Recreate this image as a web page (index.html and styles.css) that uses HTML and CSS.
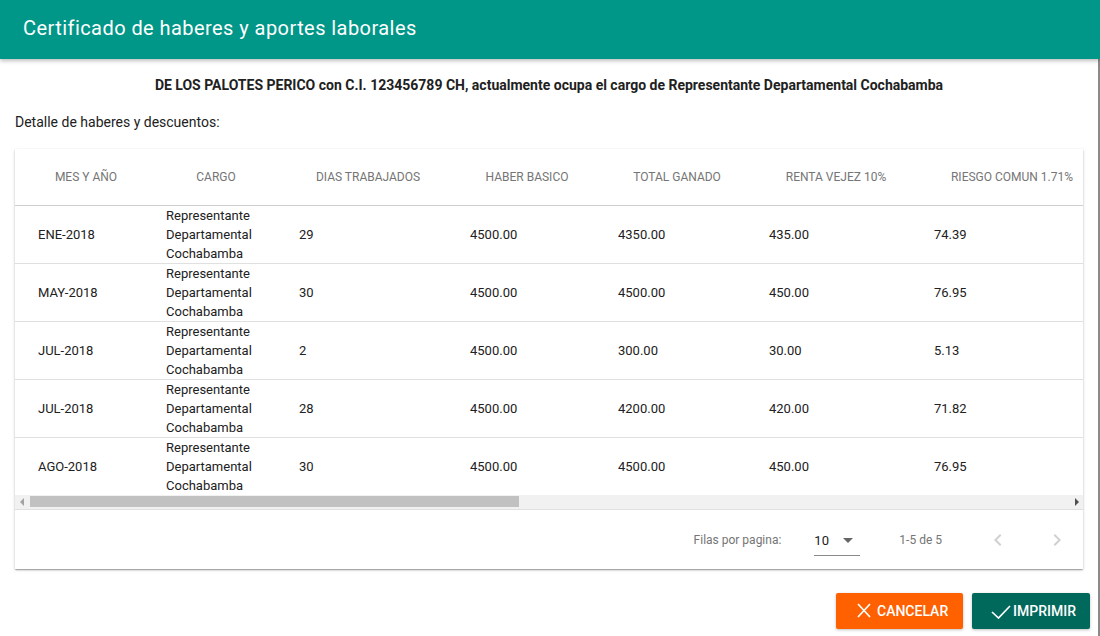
FILE: index.html
```html
<!DOCTYPE html>
<html lang="es">
<head>
<meta charset="utf-8">
<title>Certificado de haberes y aportes laborales</title>
<link rel="stylesheet" href="styles.css">
</head>
<body>
<div class="dialog">
  <header class="dlg-head">
    <h1 class="dlg-title">Certificado de haberes y aportes laborales</h1>
  </header>
  <main class="dlg-body">
    <p class="lead">DE LOS PALOTES PERICO con C.I. 123456789 CH, actualmente ocupa el cargo de Representante Departamental Cochabamba</p>
    <p class="subtitle">Detalle de haberes y descuentos:</p>
    <section class="card">
      <div class="table-wrap">
        <table class="grid">
          <colgroup>
            <col class="w1"><col class="w2"><col class="w3"><col class="w4"><col class="w5"><col class="w6"><col class="w7">
          </colgroup>
          <thead>
            <tr>
              <th>MES Y AÑO</th><th>CARGO</th><th>DIAS TRABAJADOS</th><th>HABER BASICO</th><th>TOTAL GANADO</th><th>RENTA VEJEZ 10%</th><th>RIESGO COMUN 1.71%</th>
            </tr>
          </thead>
          <tbody>
            <tr><td>ENE-2018</td><td>Representante Departamental Cochabamba</td><td>29</td><td>4500.00</td><td>4350.00</td><td>435.00</td><td>74.39</td></tr>
            <tr><td>MAY-2018</td><td>Representante Departamental Cochabamba</td><td>30</td><td>4500.00</td><td>4500.00</td><td>450.00</td><td>76.95</td></tr>
            <tr><td>JUL-2018</td><td>Representante Departamental Cochabamba</td><td>2</td><td>4500.00</td><td>300.00</td><td>30.00</td><td>5.13</td></tr>
            <tr><td>JUL-2018</td><td>Representante Departamental Cochabamba</td><td>28</td><td>4500.00</td><td>4200.00</td><td>420.00</td><td>71.82</td></tr>
            <tr><td>AGO-2018</td><td>Representante Departamental Cochabamba</td><td>30</td><td>4500.00</td><td>4500.00</td><td>450.00</td><td>76.95</td></tr>
          </tbody>
        </table>
      </div>
      <div class="hscroll">
        <span class="arrow arrow-left"></span>
        <div class="track"><div class="thumb"></div></div>
        <span class="arrow arrow-right"></span>
      </div>
      <footer class="pager">
        <span class="pager-label">Filas por pagina:</span>
        <div class="select">
          <span class="select-value">10</span>
          <span class="select-caret"></span>
        </div>
        <span class="pager-range">1-5 de 5</span>
        <button class="nav-btn" aria-label="Anterior">
          <svg width="24" height="24" viewBox="0 0 24 24"><path d="M15.41 7.41L14 6l-6 6 6 6 1.41-1.41L10.83 12z" fill="#d0d0d0"/></svg>
        </button>
        <button class="nav-btn" aria-label="Siguiente">
          <svg width="24" height="24" viewBox="0 0 24 24"><path d="M10 6L8.59 7.41 13.17 12l-4.58 4.59L10 18l6-6z" fill="#d0d0d0"/></svg>
        </button>
      </footer>
    </section>
    <div class="actions">
      <button class="btn btn-cancel">
        <svg class="ico-x" width="14" height="15" viewBox="0 0 14 15"><path d="M1 1L13 14M13 1L1 14" stroke="#fff" stroke-width="1.7" fill="none"/></svg>
        <span>CANCELAR</span>
      </button>
      <button class="btn btn-print">
        <svg class="ico-check" width="20" height="15" viewBox="0 0 20 15"><path d="M1 8L7.5 14L19 2" stroke="#fff" stroke-width="1.7" fill="none"/></svg>
        <span>IMPRIMIR</span>
      </button>
    </div>
  </main>
</div>
</body>
</html>
```

FILE: styles.css
```css
* { box-sizing: border-box; }
html, body { margin: 0; padding: 0; }
body {
  width: 1100px;
  height: 636px;
  overflow: hidden;
  background: #fff;
  font-family: Roboto, "Liberation Sans", Arial, sans-serif;
  color: #212121;
}
.dialog {
  position: relative;
  height: 636px;
  display: flex;
  flex-direction: column;
}
.dialog::after {
  content: "";
  position: absolute;
  right: 0;
  top: 41px;
  bottom: 0;
  width: 2px;
  background: #8a8a8a;
}
.dlg-head {
  height: 59px;
  background: #009688;
  display: flex;
  align-items: center;
  padding-left: 23px;
  padding-bottom: 3px;
  box-shadow: 0 2px 4px rgba(0,0,0,0.25);
  position: relative;
  z-index: 1;
}
.dlg-title {
  margin: 0;
  font-size: 20px;
  font-weight: 400;
  color: #fff;
  letter-spacing: 0.44px;
}
.dlg-body {
  padding: 17px 17px 0 15px;
}
.lead {
  margin: 0;
  text-align: center;
  font-weight: 700;
  font-size: 14px;
  line-height: 18px;
}
.subtitle {
  margin: 19px 0 0;
  font-size: 14px;
  line-height: 18px;
}
.card {
  margin-top: 18px;
  width: 1068px;
  background: #fff;
  box-shadow: 0 1px 3px rgba(0,0,0,0.2), 0 1px 1px rgba(0,0,0,0.14), 0 2px 1px -1px rgba(0,0,0,0.12);
}
.table-wrap {
  overflow: hidden;
  width: 1068px;
}
.grid {
  border-collapse: collapse;
  table-layout: fixed;
  width: 1098px;
}
.w1 { width: 142px; }
.w2 { width: 118px; }
.w3 { width: 186px; }
.w4 { width: 132px; }
.w5 { width: 168px; }
.w6 { width: 150px; }
.w7 { width: 202px; }
.grid th {
  height: 56px;
  font-size: 12px;
  font-weight: 400;
  color: #757575;
  text-align: center;
  white-space: nowrap;
  padding: 1px 0 0;
  border-bottom: 1px solid #cfcfcf;
}
.grid td {
  height: 58px;
  font-size: 13px;
  line-height: 19px;
  color: #212121;
  padding: 0 0 0 24px;
  border-bottom: 1px solid #e0e0e0;
  vertical-align: middle;
}
.grid tbody tr:last-child td { border-bottom: 0; height: 57px; }
.grid td:nth-child(1) { padding-left: 23px; }
.grid td:nth-child(2) { padding-left: 9px; padding-right: 4px; }
.grid td:nth-child(3) { padding-left: 24px; }
.grid td:nth-child(4) { padding-left: 9px; }
.grid td:nth-child(5) { padding-left: 25px; }
.grid td:nth-child(6) { padding-left: 8px; }
.grid td:nth-child(7) { padding-left: 23px; }
.hscroll {
  height: 15px;
  background: #f1f1f1;
  display: flex;
  align-items: center;
  border-bottom: 1px solid #e0e0e0;
}
.arrow {
  width: 13px;
  height: 15px;
  display: flex;
  align-items: center;
  justify-content: center;
  flex: none;
}
.arrow-left::before {
  content: "";
  border-style: solid;
  border-width: 4px 4px 4px 0;
  border-color: transparent #a3a3a3 transparent transparent;
}
.arrow-right::before {
  content: "";
  border-style: solid;
  border-width: 4px 0 4px 4px;
  border-color: transparent transparent transparent #505050;
}
.track {
  flex: 1;
  height: 11px;
  padding: 0 2px;
}
.thumb {
  width: 489px;
  height: 11px;
  background: #c1c1c1;
}
.pager {
  height: 59px;
  display: flex;
  align-items: center;
  justify-content: flex-end;
  padding-right: 14px;
  padding-top: 2px;
  font-size: 12px;
  color: #757575;
}
.pager-label { margin-right: 33px; }
.select {
  width: 46px;
  height: 30px;
  display: flex;
  align-items: center;
  justify-content: space-between;
  border-bottom: 1px solid #8a8a8a;
  margin-top: 2px;
  padding-right: 7px;
  margin-right: 39px;
}
.select-value { font-size: 13px; color: #212121; }
.select-caret {
  border-style: solid;
  border-width: 5px 5px 0 5px;
  border-color: #666 transparent transparent transparent;
}
.pager-range { margin-right: 44px; }
.nav-btn {
  width: 24px;
  height: 24px;
  padding: 0;
  border: 0;
  background: none;
  display: flex;
  align-items: center;
  justify-content: center;
}
.nav-btn + .nav-btn { margin-left: 35px; }
.actions {
  display: flex;
  justify-content: flex-end;
  gap: 9px;
  margin-top: 24px;
  margin-right: -7px;
}
.btn {
  height: 36px;
  border: 0;
  border-radius: 2px;
  color: #fff;
  font-family: inherit;
  font-size: 14px;
  font-weight: 500;
  display: flex;
  align-items: center;
  padding: 0;
  box-shadow: 0 1px 3px rgba(0,0,0,0.25);
}
.btn-cancel { background: #ff6000; width: 127px; padding-left: 21px; }
.btn-cancel .ico-x { margin-right: 6px; }
.btn-print { background: #00695c; width: 118px; padding-left: 19px; }
.btn-print .ico-check { margin-right: 2px; margin-top: 1px; }
```
